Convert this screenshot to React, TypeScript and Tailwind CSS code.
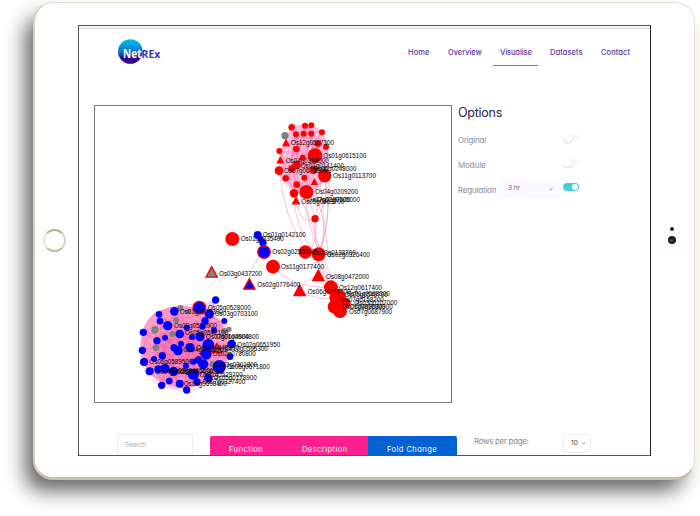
import React from "react";

type Dot = [number, number, number];
type Label = [number, number, string];

const upperRed: Dot[] = [
  [95, 52, 10], [135, 47, 9], [154, 46, 9], [108, 73, 9], [131, 71, 9], [154, 71, 9], [186, 67, 9],
  [109, 117, 10], [174, 101, 10], [198, 111, 9], [58, 123, 9], [165, 137, 22], [128, 143, 9],
  [57, 182, 13], [77, 205, 10], [133, 203, 9], [194, 197, 20], [110, 224, 10], [102, 250, 13],
  [139, 246, 21], [110, 165, 13], [95, 176, 10], [160, 180, 12], [165, 326, 11],
];
const upperLabels: Label[] = [
  [93, 105, "Os12g0507300"], [190, 144, "Os01g0615100"], [77, 158, "Os04g0398000"], [122, 174, "Os07g0141400"],
  [160, 182, "Os05g0248000"], [72, 189, "Os07g0673900"], [219, 204, "Os11g0113700"], [165, 252, "Os04g0209200"],
  [142, 276, "Os07g0187500"], [171, 275, "Os02g0105000"], [124, 281, "Os05g0463700"],
];
const blue: Dot[] = [
  [257, 45, 11], [133, 79, 13], [87, 88, 10], [90, 108, 10], [238, 87, 14], [225, 108, 11], [283, 108, 9],
  [113, 122, 14], [170, 128, 9], [217, 125, 9], [252, 136, 9], [40, 142, 11], [149, 147, 13], [186, 157, 9],
  [210, 155, 14], [81, 167, 11], [105, 158, 9], [153, 177, 9], [132, 188, 11], [144, 197, 14], [180, 188, 14],
  [235, 180, 18], [228, 207, 17], [305, 177, 13], [37, 196, 11], [97, 212, 11], [72, 222, 9], [42, 231, 12],
  [300, 215, 10], [205, 225, 11], [220, 238, 15], [59, 259, 12], [85, 253, 12], [105, 251, 14], [131, 259, 14],
  [168, 243, 9], [190, 268, 17], [235, 279, 13], [118, 288, 10], [149, 296, 12], [95, 301, 11], [170, 315, 11],
  [201, 291, 11], [268, 245, 20], [190, 230, 9],
];
const grey: Dot[] = [
  [151, 69, 9], [175, 80, 8], [138, 105, 9], [75, 134, 11], [127, 147, 9], [78, 188, 10],
  [283, 138, 9], [297, 133, 8], [247, 238, 9],
];
const lowerLabels: Label[] = [
  [233, 75, "Os05g0528000"], [149, 86, "Os01g0505300"], [254, 92, "Os03g0703100"], [132, 128, "Os09g0533900"],
  [165, 150, "Os05g0542100"], [228, 162, "Os07g0604900"], [258, 162, "Os01g0604800"], [322, 184, "Os02g0651950"],
  [198, 193, "Os11g0448300"], [284, 197, "Os10g0565300"], [160, 199, "Os04g0583900"], [248, 213, "Os02g0780800"],
  [58, 237, "Os06g0589500"], [253, 244, "Os03g0301800"], [290, 251, "Os08g0671800"], [121, 262, "Os08g0415600"],
  [76, 265, "Os04g0625100"], [149, 265, "Os03g0438000"], [209, 275, "Os01g0529700"], [251, 285, "Os05g0178900"],
  [217, 297, "Os07g0327400"], [161, 302, "Os01g0698400"],
];
const middleRed: Dot[] = [
  [127, 87, 21], [249, 170, 21], [346, 126, 20], [386, 133, 21],
  [423, 232, 21], [443, 262, 25], [433, 290, 20], [450, 303, 21], [465, 280, 17],
];
const middleLabels: Label[] = [
  [218, 81, "Os01g0142100"], [152, 93, "Os01g0335400"], [247, 131, "Os02g0255500"], [368, 133, "Os03g0138700"],
  [410, 140, "Os02g0326400"], [273, 177, "Os11g0177400"], [87, 196, "Os03g0437200"], [408, 206, "Os08g0472000"],
  [202, 231, "Os02g0776400"], [447, 238, "Os12g0617400"], [353, 252, "Os06g0211200"], [464, 261, "Os05g0549700"],
  [470, 256, "Os01g0568300"], [452, 275, "Os07g0158200"], [493, 285, "Os03g0107000"], [457, 296, "Os01g0812000"],
  [479, 295, "Os04g0684900"], [477, 310, "Os07g0687900"],
];

// Curved links between node pairs, spread by fixed strides so every node is reached.
function links(nodes: Dot[], strides: number[], bend: number): string {
  const out: string[] = [];
  strides.forEach((s, k) =>
    nodes.forEach(([x, y], i) => {
      const [u, v] = nodes[(i + s) % nodes.length];
      const b = (k % 2 ? bend : -bend) * (0.6 + ((i * 7) % 5) / 5);
      out.push(`M${x} ${y}Q${(x + u) / 2 - (v - y) * b} ${(y + v) / 2 + (u - x) * b} ${u} ${v}`);
    }),
  );
  return out.join("");
}

function Dots({ data, fill }: { data: Dot[]; fill: string }) {
  return <>{data.map(([x, y, r], i) => <circle key={i} cx={x} cy={y} r={r} fill={fill} />)}</>;
}

function Tri({ x, y, s, fill = "#f00" }: { x: number; y: number; s: number; fill?: string }) {
  return <path d={`M${x} ${y - s}L${x + s} ${y + s * 0.85}H${x - s}Z`} fill={fill} stroke="#f00" strokeWidth="4" />;
}

function Labels({ data }: { data: Label[] }) {
  return (
    <g fontSize="20.5" fill="#000">
      {data.map(([x, y, t], i) => <text key={i} x={x} y={y + 1} textLength="129" lengthAdjust="spacingAndGlyphs">{t}</text>)}
    </g>
  );
}

function Network() {
  return (
    <svg viewBox="95 106 356 296" className="block h-full w-full font-['Liberation_Sans',sans-serif]">
      <g transform="translate(130 285) scale(.33333)">
        <path d="M78 82Q150 45 230 80Q300 105 295 215Q280 270 210 300Q140 325 80 285Q25 240 32 170Q40 105 78 82Z" fill="#f8569f" fillOpacity=".55" />
        <path d={links(blue, [3, 5, 7, 11, 13, 17, 19, 21], 0.2)} fill="none" stroke="#f25ca2" strokeWidth="1.3" strokeOpacity=".55" />
        <path d="M37 142Q60 75 151 62Q265 45 290 125M35 196Q25 310 170 316Q250 315 303 215M283 108Q295 145 300 215M87 88Q115 65 208 68" fill="none" stroke="#f48ab9" strokeWidth="1.5" />
        <Dots data={grey} fill="#808080" />
        <Dots data={blue} fill="#00f" />
        <circle cx="208" cy="68" r="19" fill="#00f" stroke="#f00" strokeWidth="4" />
        <Tri x={261} y={190} s={15} fill="#808080" />
        <Labels data={lowerLabels} />
      </g>
      <g transform="translate(260 110) scale(.33333)">
        <path d="M90 55Q140 25 188 65L205 120L195 210L155 260L105 250L65 205L58 130Z" fill="#ff9cc8" fillOpacity=".6" />
        <path d={links(upperRed.slice(0, 23), [3, 5, 7, 11], 0.22)} fill="none" stroke="#f564aa" strokeWidth="1.5" strokeOpacity=".65" />
        <path d="M102 250Q100 350 165 430M110 272Q120 350 165 326M139 246Q135 330 175 420M133 203Q150 280 165 326M163 215Q180 290 165 326M194 197Q220 330 175 430M198 210Q205 290 165 326M165 326Q160 390 180 430M150 240Q215 330 178 430M120 260Q170 365 180 430M198 111Q225 280 180 430M180 210Q190 330 205 430M58 182Q70 320 140 425M165 326Q175 380 150 425" fill="none" stroke="#f98fc0" strokeWidth="1.7" />
        <circle cx="75" cy="77" r="11" fill="#808080" />
        <Dots data={upperRed} fill="#f00" />
        <Tri x={78} y={99} s={9} /><Tri x={61} y={151} s={9} /><Tri x={163} y={216} s={8} /><Tri x={108} y={273} s={10} />
        <Labels data={upperLabels} />
      </g>
      <g transform="translate(190 210) scale(.33333)">
        <path d="M208 140Q175 180 178 223M249 170Q310 235 423 232M385 197Q350 205 329 242M329 242Q380 275 440 262M386 133Q380 190 423 232M375 140Q405 190 425 240M390 140Q405 180 440 260M386 133Q430 190 440 250M346 126Q390 170 432 240M385 197Q400 230 443 262" fill="none" stroke="#f7a1c9" strokeWidth="2" />
        <Dots data={middleRed} fill="#f00" />
        <Dots data={[[203, 75, 12], [212, 87, 9], [219, 98, 11]]} fill="#00f" />
        <circle cx="222" cy="126" r="19" fill="#00f" stroke="#f00" strokeWidth="3.5" />
        <Tri x={65} y={187} s={17} fill="#808080" />
        <Tri x={178} y={223} s={17} fill="#00f" />
        <Tri x={385} y={197} s={17} /><Tri x={329} y={242} s={17} />
        <Labels data={middleLabels} />
      </g>
    </svg>
  );
}

function Toggle({ on = false }: { on?: boolean }) {
  return (
    <div className={`flex h-2 w-4 items-center rounded-full ${on ? "justify-end bg-[#43cde0] pr-px" : "bg-[#f8f7fe]"}`}>
      <div className={`rounded-full bg-white ${on ? "size-[6px]" : "size-[8px] shadow-[0_1px_2px_rgba(0,0,0,.2)]"}`} />
    </div>
  );
}

function Chevron() {
  return (
    <svg viewBox="0 0 6 4" className="h-[3px] w-1"><path d="M1 .7l2 2 2-2" fill="none" stroke="#777" strokeWidth="1.2" /></svg>
  );
}

export default function App() {
  return (
    <div className="h-[516px] w-[700px] overflow-hidden bg-white pt-[2px] pl-[33px] font-['Inter',sans-serif] [font-feature-settings:'cv11']">
      <div className="flex h-[478px] w-[662px] rounded-[20px] border border-t-[#e2dfd2] border-r-[#eee6c4] border-b-[3px] border-b-[#c8c0aa] border-l-2 border-l-[#d8d0b7] bg-[#fefefe] shadow-[-10px_13px_20px_-2px_rgba(0,0,0,.6)]">
        <div className="flex w-[43px] shrink-0 items-center pl-[8px]">
          <div className="size-[23px] rounded-full border-2 border-t-[#b5ae9f] border-r-[#dcd5c0] border-b-[#c5bdac] border-l-[#eee5ca]" />
        </div>
        <div className="mt-[22px] flex h-[431px] w-[573px] shrink-0 flex-col overflow-hidden border border-[#555] border-r-[#222] bg-white">
          <div className="h-[3px] shrink-0 border-b border-[#ddd] bg-[#f8f8f8]" />
          <header className="flex h-[76px] shrink-0 pl-[39px]">
            <svg viewBox="0 0 44 26" className="mt-[10px] h-[26px] w-[44px] shrink-0 font-['Open_Sans',sans-serif]">
              <defs><linearGradient id="logo" x2="0" y2="1"><stop stopColor="#00c0f5" /><stop offset=".5" stopColor="#0877ce" /><stop offset=".75" stopColor="#320696" /><stop offset="1" stopColor="#32007f" /></linearGradient></defs>
              <circle cx="12.3" cy="12.5" r="12.3" fill="url(#logo)" />
              <text x="5" y="19" fontSize="11.5" fontWeight="700" fill="white" textLength="18.5" lengthAdjust="spacingAndGlyphs">Net</text>
              <text x="23.6" y="19" fontSize="11" fontWeight="700" fill="#3838b4" textLength="18.8" lengthAdjust="spacingAndGlyphs">REx</text>
            </svg>
            <nav className="mt-[18px] ml-[246px] flex h-[19px] text-[7.5px] leading-[12px] font-medium tracking-[.08px] text-[#64349b]">
              <a className="w-[40px]">Home</a>
              <a className="w-[45px] tracking-[-.05px]">Overview</a>
              <a className="mr-[12px] w-[45px] border-b border-[#b058ce] pl-[7px] tracking-[-.1px]">Visualise</a>
              <a className="w-[51px]">Datasets</a>
              <a>Contact</a>
            </nav>
          </header>
          <main className="flex h-[299px] shrink-0 pl-[15px]">
            <div className="h-[298px] w-[358px] shrink-0 border border-[#777]"><Network /></div>
            <aside className="ml-[6px] w-[122px] text-[8px] text-[#8b8da3]">
              <h2 className="text-[12.5px] leading-[15px] tracking-[-.25px] text-[#302052]">Options</h2>
              <div className="mt-[14px] flex h-[12px] justify-between"><span className="leading-[12px] tracking-[-.2px]">Original</span><Toggle /></div>
              <div className="mt-[13px] flex h-[12px] justify-between"><span className="leading-[12px] tracking-[-.1px]">Module</span><Toggle /></div>
              <div className="mt-[9px] flex h-[18px]">
                <span className="w-[42px] tracking-[-.2px] leading-[20px]">Regulation</span>
                <div className="mr-[3px] flex w-[60px] items-center justify-between bg-[#faf9ff] pr-[7px] pl-[8px] text-[6.5px] text-[#666]">3 hr<Chevron /></div>
                <div className="mt-[3px]"><Toggle on /></div>
              </div>
            </aside>
          </main>
          <section className="mt-[30px] flex shrink-0 pl-[38px]">
            <div className="h-[24px] w-[76px] border border-[#ededed] pl-[7px] text-[6.5px] leading-[21px] tracking-[-.2px] text-[#aaa]">Search</div>
            <div className="mt-[2px] ml-[17px] flex h-[24px] w-[247px] overflow-hidden rounded-t-[2px] text-[7.5px] leading-[28px] tracking-[.45px] text-white">
              <div className="w-[73px] bg-[#fb2090] pl-[19px]">Function</div>
              <div className="w-[85px] bg-[#fb2090] pl-[19px] whitespace-nowrap">Description</div>
              <div className="grow bg-[#0262d2] pl-[19px] whitespace-nowrap">Fold Change</div>
            </div>
            <div className="ml-[17px] w-[89px] text-[8px] leading-[14px] tracking-[-.33px] text-[#858ba0]">Rows per page:</div>
            <div className="flex h-[19px] w-[28px] items-center justify-between rounded-[2px] border border-[#eee] pr-[4px] pl-[7px] text-[6.5px] text-[#333]">10<Chevron /></div>
          </section>
        </div>
        <div className="flex grow flex-col items-center pt-[224px] pr-[2px]">
          <div className="size-[4px] rounded-full bg-[#252525]" />
          <div className="mt-[5px] flex size-[8px] items-center justify-center rounded-full bg-[#1c1e22]"><div className="size-[3px] rounded-full bg-[#175b83]" /></div>
        </div>
      </div>
    </div>
  );
}
